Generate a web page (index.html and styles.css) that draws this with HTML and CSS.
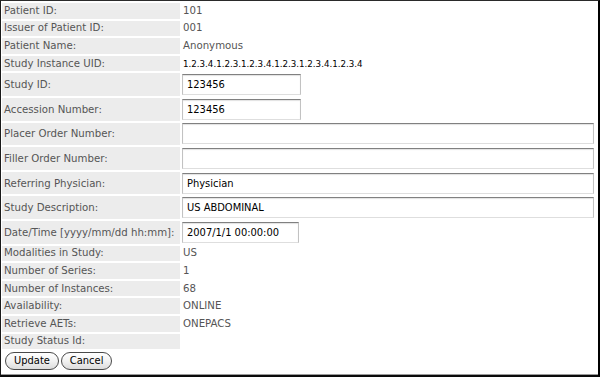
FILE: index.html
```html
<!DOCTYPE html>
<html>
<head>
<meta charset="utf-8">
<link rel="stylesheet" href="styles.css">
</head>
<body>
<div class="frame">
  <div class="inner">
    <form class="study-form">
      <table class="fields">
        <tr class="text-row"><td class="label">Patient ID:</td><td class="value">101</td></tr>
        <tr class="text-row"><td class="label">Issuer of Patient ID:</td><td class="value">001</td></tr>
        <tr class="text-row"><td class="label">Patient Name:</td><td class="value">Anonymous</td></tr>
        <tr class="text-row"><td class="label">Study Instance UID:</td><td class="value uid">1.2.3.4.1.2.3.1.2.3.4.1.2.3.1.2.3.4.1.2.3.4</td></tr>
        <tr class="input-row"><td class="label">Study ID:</td><td class="field"><input class="text short" type="text" value="123456"></td></tr>
        <tr class="input-row"><td class="label">Accession Number:</td><td class="field"><input class="text short" type="text" value="123456"></td></tr>
        <tr class="input-row"><td class="label">Placer Order Number:</td><td class="field"><input class="text long" type="text" value=""></td></tr>
        <tr class="input-row"><td class="label">Filler Order Number:</td><td class="field"><input class="text long" type="text" value=""></td></tr>
        <tr class="input-row"><td class="label">Referring Physician:</td><td class="field"><input class="text long" type="text" value="Physician"></td></tr>
        <tr class="input-row"><td class="label">Study Description:</td><td class="field"><input class="text long" type="text" value="US ABDOMINAL"></td></tr>
        <tr class="input-row"><td class="label">Date/Time [yyyy/mm/dd hh:mm]:</td><td class="field"><input class="text date" type="text" value="2007/1/1 00:00:00"></td></tr>
        <tr class="text-row"><td class="label">Modalities in Study:</td><td class="value">US</td></tr>
        <tr class="text-row"><td class="label">Number of Series:</td><td class="value">1</td></tr>
        <tr class="text-row"><td class="label">Number of Instances:</td><td class="value">68</td></tr>
        <tr class="text-row"><td class="label">Availability:</td><td class="value">ONLINE</td></tr>
        <tr class="text-row"><td class="label">Retrieve AETs:</td><td class="value">ONEPACS</td></tr>
        <tr class="text-row"><td class="label">Study Status Id:</td><td class="value"></td></tr>
      </table>
      <div class="actions">
        <button type="button" class="btn">Update</button>
        <button type="button" class="btn">Cancel</button>
      </div>
    </form>
  </div>
</div>
</body>
</html>
```

FILE: styles.css
```css
html, body {
  margin: 0;
  padding: 0;
  background: #fff;
}

.frame {
  width: 600px;
  height: 377px;
  box-sizing: border-box;
  border-left: 1px solid #1a1a1a;
  border-top: 1px solid #2a2a2a;
  border-right: 2px solid #000;
  border-bottom: 2px solid #0a0a0a;
  overflow: hidden;
}

.inner {
  height: 100%;
  box-sizing: border-box;
  border-bottom: 1px solid #9a9a9a;
}

.study-form {
  margin: 0;
}

.fields {
  border-collapse: separate;
  border-spacing: 1px 2px;
  margin-top: 0;
  font-family: "DejaVu Sans", Verdana, sans-serif;
  font-size: 10.2px;
  color: #555;
}

.fields td {
  padding: 0 2px;
  vertical-align: middle;
}

.label {
  width: 174px;
  background: #ececec;
  white-space: nowrap;
}

.text-row td {
  height: 15.6px;
  line-height: 14px;
}

.input-row td.field {
  padding: 0.8px 1px;
}

.value {
  color: #555;
}

.uid {
  font-family: "DejaVu Sans", Verdana, sans-serif;
  font-size: 8.7px;
  color: #000;
}

.text {
  display: block;
  box-sizing: border-box;
  height: 21px;
  margin: 0;
  padding: 0 4px;
  border: 1px solid;
  border-color: #808080 #c2c2c2 #dedede #c2c2c2;
  box-shadow: inset 0 1px 1px rgba(0, 0, 0, 0.12);
  background: #fff;
  font-family: "DejaVu Sans Condensed", "DejaVu Sans", sans-serif;
  font-size: 11px;
  color: #000;
  outline: none;
}

.short {
  width: 119px;
}

.date {
  width: 117px;
}

.long {
  width: 412px;
}

.actions {
  display: flex;
  gap: 2px;
  padding: 0 0 0 4px;
  margin-top: 1px;
}

.btn {
  height: 18px;
  padding: 0 8px;
  border: 1px solid #4a4a4a;
  border-radius: 9px;
  background: linear-gradient(#ffffff, #f2f2f2 50%, #dcdcdc);
  font-family: "DejaVu Sans Condensed", "DejaVu Sans", sans-serif;
  font-size: 11px;
  color: #000;
  line-height: 16px;
}
```
